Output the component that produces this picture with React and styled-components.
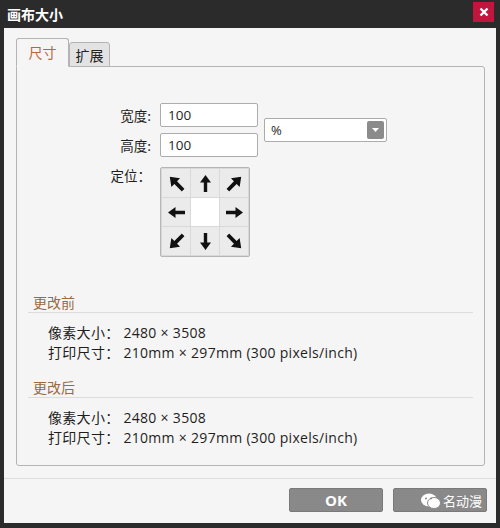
import React from "react";
import styled, { createGlobalStyle } from "styled-components";

const GlobalStyle = createGlobalStyle`
    html, body {
        margin: 0;
        padding: 0;
        background: #2b2b2b;
    }
    body {
        font-family: "Open Sans", "Noto Sans CJK SC", sans-serif;
        color: #1e1e1e;
    }
`;

const Window = styled.div`
    width: 500px;
    height: 528px;
    background: #2b2b2b;
    display: flex;
    flex-direction: column;
    box-sizing: border-box;
`;

const TitleBar = styled.div`
    height: 28px;
    flex: none;
    display: flex;
    align-items: center;
    justify-content: space-between;
    padding: 0 6px 0 7px;
    color: #fff;
    font-family: "Noto Sans CJK SC", sans-serif;
    font-weight: 700;
    font-size: 14px;
`;

const CloseButton = styled.div`
    width: 21px;
    height: 20px;
    margin-top: -4px;
    background: #c2143d;
    display: flex;
    align-items: center;
    justify-content: center;
`;

const Body = styled.div`
    flex: none;
    height: 495px;
    margin: 0 4px 0 4px;
    background: #f6f5f5;
    display: flex;
    flex-direction: column;
`;

const TabArea = styled.div`
    padding: 11px 11px 0 12px;
    display: flex;
    flex-direction: column;
`;

const TabRow = styled.div`
    display: flex;
    align-items: flex-end;
    height: 28px;
    margin-bottom: -1px;
    position: relative;
    z-index: 1;
`;

const Tab = styled.div`
    box-sizing: border-box;
    width: ${(p) => (p.$active ? 53 : 41)}px;
    height: ${(p) => (p.$active ? 29 : 25)}px;
    border: 1px solid #b4b4b4;
    border-bottom: ${(p) => (p.$active ? "1px solid #f6f5f5" : "1px solid #b4b4b4")};
    border-radius: 3px 3px 0 0;
    background: ${(p) => (p.$active ? "#f6f5f5" : "#e3e3e3")};
    color: ${(p) => (p.$active ? "#b4693a" : "#222")};
    font-family: "Noto Sans CJK SC", sans-serif;
    font-size: 14px;
    display: flex;
    align-items: center;
    justify-content: center;
    padding-bottom: ${(p) => (p.$active ? 2 : 0)}px;
`;

const Panel = styled.div`
    box-sizing: border-box;
    height: 400px;
    border: 1px solid #b4b4b4;
    border-radius: 0 3px 3px 3px;
    background: #f6f5f5;
    padding: 36px 11px 0 11px;
`;

const FormGrid = styled.div`
    display: grid;
    grid-template-columns: 125px 98px 122px;
    column-gap: 7px;
    row-gap: 6px;
    align-items: center;
`;

const Label = styled.div`
    text-align: right;
    font-family: "Noto Sans CJK SC", sans-serif;
    font-size: 13.5px;
    line-height: 18px;
    padding-right: 2px;
    align-self: ${(p) => (p.$top ? "start" : "center")};
    margin-top: ${(p) => (p.$top ? 3 : 0)}px;
`;

const Input = styled.div`
    box-sizing: border-box;
    height: 24px;
    border: 1px solid #acacac;
    border-radius: 2px;
    background: #fff;
    font-size: 13.5px;
    padding-left: 7px;
    display: flex;
    align-items: center;
`;

const Select = styled.div`
    box-sizing: border-box;
    grid-column: 3;
    grid-row: 1 / span 2;
    height: 24px;
    margin-left: -1px;
    border: 1px solid #acacac;
    border-radius: 2px;
    background: #fff;
    font-size: 13px;
    padding: 0 2px 0 6px;
    display: flex;
    align-items: center;
    justify-content: space-between;
`;

const DropButton = styled.div`
    width: 17px;
    height: 18px;
    background: #8b8b8b;
    border-radius: 2px;
    display: flex;
    align-items: center;
    justify-content: center;
`;

const Anchor = styled.div`
    grid-column: 2;
    width: 90px;
    height: 90px;
    margin-top: 4px;
    box-sizing: border-box;
    border: 1px solid #b6b6b6;
    border-radius: 2px;
    display: grid;
    grid-template-columns: repeat(3, 1fr);
    grid-template-rows: repeat(3, 1fr);
    background: #d9d9d9;
    gap: 1px;
    padding: 1px;
`;

const Cell = styled.div`
    background: ${(p) => (p.$center ? "#ffffff" : "#ebebeb")};
    display: flex;
    align-items: center;
    justify-content: center;
`;

const Section = styled.div`
    margin-top: ${(p) => p.$gap}px;
`;

const SectionHead = styled.div`
    font-family: "Noto Sans CJK SC", sans-serif;
    font-size: 14px;
    line-height: 18px;
    color: #9a6a42;
    padding: 0 5px 1px;
    border-bottom: 1px solid #dcdcdc;
`;

const InfoList = styled.div`
    padding: 10px 0 0 20px;
`;

const InfoLine = styled.div`
    font-size: 14px;
    line-height: 20px;
    letter-spacing: 0.3px;
    white-space: pre;
`;

const Footer = styled.div`
    margin-top: 12px;
    border-top: 1px solid #dcdcdc;
    padding: 9px 9px 0 0;
    display: flex;
    justify-content: flex-end;
    gap: 10px;
`;

const Button = styled.div`
    position: relative;
    box-sizing: border-box;
    width: 94px;
    height: 24px;
    background: #898989;
    border: 1px solid #7a7a7a;
    border-radius: 2px;
    color: #fff;
    font-weight: 700;
    font-size: 15px;
    display: flex;
    align-items: center;
    justify-content: center;
`;

const Watermark = styled.div`
    position: absolute;
    right: 4px;
    top: 2px;
    display: flex;
    align-items: center;
    gap: 1px;
    color: #fff;
    font-family: "Noto Sans CJK SC", sans-serif;
    font-weight: 400;
    font-size: 13px;
`;

const ArrowSvg = styled.svg`
    transform: rotate(${(p) => p.$deg}deg) scale(${(p) => (p.$deg % 90 === 0 ? 1 : 1.12)});
`;

const Arrow = ({ deg }) => (
    <ArrowSvg $deg={deg} width="11" height="17" viewBox="0 0 11 17">
        <polygon points="5.5,0 11,7.5 7.2,7.5 7.2,17 3.8,17 3.8,7.5 0,7.5" fill="#111" />
    </ArrowSvg>
);

const anchors = [-45, 0, 45, -90, null, 90, -135, 180, 135];

const Info = () => (
    <InfoList>
        <InfoLine>像素大小： 2480 × 3508</InfoLine>
        <InfoLine>打印尺寸： 210mm × 297mm (300 pixels/inch)</InfoLine>
    </InfoList>
);

export default function App() {
    return (
        <>
            <GlobalStyle />
            <Window>
                <TitleBar>
                    <span>画布大小</span>
                    <CloseButton>
                        <svg width="10" height="10" viewBox="0 0 10 10">
                            <path d="M1.5 1.5 L8.5 8.5 M8.5 1.5 L1.5 8.5" stroke="#fff" strokeWidth="2.4" />
                        </svg>
                    </CloseButton>
                </TitleBar>
                <Body>
                    <TabArea>
                        <TabRow>
                            <Tab $active>尺寸</Tab>
                            <Tab>扩展</Tab>
                        </TabRow>
                        <Panel>
                            <FormGrid>
                                <Label>宽度:</Label>
                                <Input>100</Input>
                                <Select>
                                    <span>%</span>
                                    <DropButton>
                                        <svg width="7" height="4" viewBox="0 0 7 4">
                                            <polygon points="0,0 7,0 3.5,4" fill="#fff" />
                                        </svg>
                                    </DropButton>
                                </Select>
                                <Label>高度:</Label>
                                <Input>100</Input>
                                <Label $top>定位：</Label>
                                <Anchor>
                                    {anchors.map((deg, i) => (
                                        <Cell key={i} $center={deg === null}>
                                            {deg !== null && <Arrow deg={deg} />}
                                        </Cell>
                                    ))}
                                </Anchor>
                            </FormGrid>
                            <Section $gap={36}>
                                <SectionHead>更改前</SectionHead>
                                <Info />
                            </Section>
                            <Section $gap={15}>
                                <SectionHead>更改后</SectionHead>
                                <Info />
                            </Section>
                        </Panel>
                    </TabArea>
                    <Footer>
                        <Button>OK</Button>
                        <Button>
                            <Watermark>
                                <svg width="22" height="18" viewBox="0 0 22 18">
                                    <ellipse cx="9" cy="8" rx="8" ry="6.5" fill="#fff" />
                                    <ellipse cx="14" cy="11" rx="6.5" ry="5.5" fill="#fff" stroke="#898989" strokeWidth="1" />
                                    <circle cx="6" cy="6.5" r="1" fill="#898989" />
                                    <circle cx="11" cy="6.5" r="1" fill="#898989" />
                                </svg>
                                <span>名动漫</span>
                            </Watermark>
                        </Button>
                    </Footer>
                </Body>
            </Window>
        </>
    );
}
